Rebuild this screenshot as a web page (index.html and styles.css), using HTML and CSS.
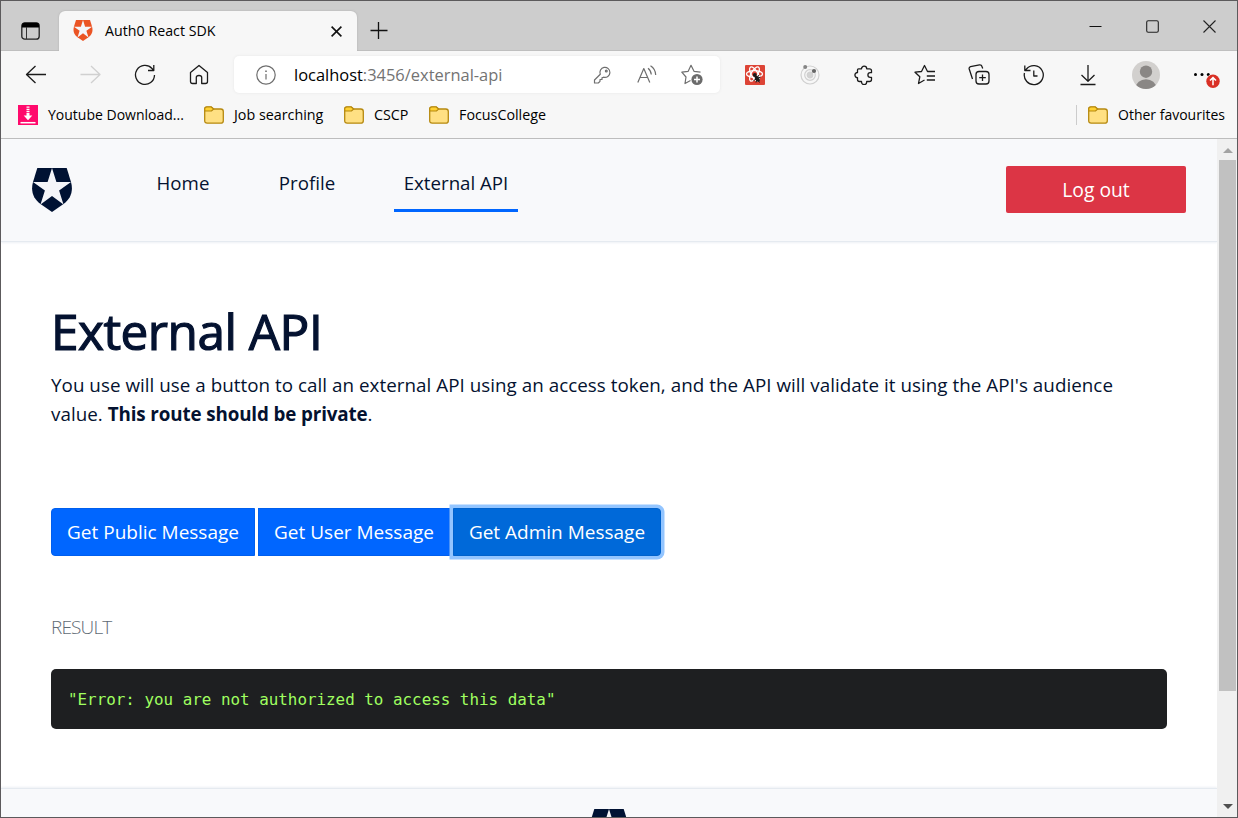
FILE: index.html
```html
<!DOCTYPE html>
<html lang="en">
<head>
<meta charset="utf-8">
<title>Auth0 React SDK</title>
<link rel="stylesheet" href="styles.css">
</head>
<body>
<svg class="defs" width="0" height="0" aria-hidden="true">
  <symbol id="shield" viewBox="0 0 40 44">
    <path fill="currentColor" d="M5.3 0H34.7L39 14C41.6 23 38.5 31 31.500 36L20 44L8.500 36C1.500 31 -1.600 23 1 14Z"/>
    <path class="shield-star" d="M20 0L24.400 14H39L27.100 22.500L31.500 36.500L20 28L8.500 36.500L12.900 22.500L1 14H15.600Z"/>
  </symbol>
  <symbol id="folder" viewBox="0 0 20 18">
    <path d="M.7 3.200Q.7 1 2.900 1H7.200L9.700 3H16.800Q19.300 3 19.300 5.500V14.700Q19.300 17.200 16.800 17.200H3.200Q.7 17.200.7 14.700Z" fill="#ffe083" stroke="#b68910" stroke-width="1.300"/>
    <path d="M.7 3.200Q.7 1 2.900 1H7.200L9.700 3 7.500 5H.9Z" fill="#ffd132" stroke="#b68910" stroke-width="1.200"/>
  </symbol>
</svg>
<div class="window">
  <header class="tabstrip">
    <svg class="tab-actions" width="19" height="18" viewBox="0 0 19 18"><rect x=".8" y=".8" width="17.400" height="16.400" rx="3" fill="none" stroke="#222" stroke-width="1.300"/><path d="M1 5.500V3Q1 .8 3.500.8H15.500Q18 .8 18 3V5.500Z" fill="#000"/><path d="M5.500 5V17" stroke="#333"/></svg>
    <div class="tab">
      <svg class="favicon" width="20" height="21"><use href="#shield"/></svg>
      <span class="tab-title">Auth0 React SDK</span>
      <svg width="11" height="11" viewBox="0 0 11 11" stroke="#111" stroke-width="1.600"><path d="M.6.6 10.400 10.400M10.400.6.6 10.400"/></svg>
    </div>
    <svg class="new-tab" width="18" height="18" viewBox="0 0 18 18" stroke="#111" stroke-width="1.300"><path d="M.5 8.500H17.500M8.500 0V17"/></svg>
    <div class="win-controls">
      <svg width="13" height="13" viewBox="0 0 13 13" stroke="#111"><path d="M.5 6.500H12.500"/></svg>
      <svg width="13" height="13" viewBox="0 0 13 13" fill="none" stroke="#222" stroke-width="1.100"><rect x=".7" y=".7" width="11.600" height="11.600" rx="1.500"/></svg>
      <svg width="13" height="13" viewBox="0 0 13 13" stroke="#222" stroke-width="1.100"><path d="M.5.5 12.500 12.500M12.500.5.5 12.500"/></svg>
    </div>
  </header>

  <div class="toolbar">
    <span class="cell"><svg class="ic" width="22" height="22" viewBox="0 0 22 22"><path d="M21 10.500H1.500M10.500 2 1.500 10.500 10.500 19"/></svg></span>
    <span class="cell off"><svg class="ic" width="22" height="22" viewBox="0 0 22 22"><path d="M1.500 10.500H21M12 2 21 10.500 12 19"/></svg></span>
    <span class="cell"><svg class="ic" width="22" height="22" viewBox="0 0 22 22"><path d="M20.500 11A9.500 9.500 0 1 1 18 4.500L19.800 6.500M19.800 1V6.500H14"/></svg></span>
    <span class="cell"><svg class="ic" width="20" height="22" viewBox="0 0 20 22"><path d="M1.500 8.500 10 1.500 18.500 8.500V17.500Q18.500 19.500 16.500 19.500H12.700V13.500Q12.700 11.500 10 11.500T7.300 13.500V19.500H3.500Q1.500 19.500 1.500 17.500Z"/></svg></span>
    <div class="address">
      <svg class="ic gray" width="20" height="20" viewBox="0 0 20 20"><circle cx="10" cy="10" r="9.200"/><path d="M10 9V14.500"/><path d="M10 5.500V7" stroke-width="1.600"/></svg>
      <span class="url">localhost<span class="path">:3456/external-api</span></span>
      <svg class="ic gray" width="18" height="18" viewBox="0 0 18 18"><path d="M7.300 8.300A5 5 0 1 1 10.600 11.200L9 11.800V13.500H7V15.300L5.300 17H1.500V14Z"/><circle cx="13.300" cy="5" r=".9"/></svg>
      <svg class="ic gray read" width="20" height="20" viewBox="0 0 20 20"><path d="M.8 17.500 6.800 3.500 12.800 17.500M3 12.500H10.700M11 3.200Q14 5.500 14.300 9.500M13.500.8Q18.500 4 18.700 10"/></svg>
      <svg class="ic gray" width="22" height="22" viewBox="0 0 22 22"><path d="M9.500 16.500 4 19.500 5 13 .8 8.200 7.200 7.300 10 1.300 13 7.300 19.500 8.200"/><circle cx="16" cy="15.500" r="5.600" fill="#6b6b6b" stroke="none"/><path d="M13 15.500H19M16 12.500V18.500" stroke="#fff" stroke-width="1.500"/></svg>
    </div>
    <span class="cell first"><svg width="20" height="20" viewBox="0 0 20 20"><rect width="20" height="20" rx="1" fill="#dd4436"/><g fill="none" stroke="#fff" stroke-width="1.300"><ellipse cx="9.500" cy="9" rx="8" ry="3.300"/><ellipse cx="9.500" cy="9" rx="8" ry="3.300" transform="rotate(60 9.500 9)"/><ellipse cx="9.500" cy="9" rx="8" ry="3.300" transform="rotate(120 9.500 9)"/></g><g fill="#1a1a1a"><circle cx="9.800" cy="10" r="1.900"/><ellipse cx="12.300" cy="13.800" rx="2" ry="3.300" transform="rotate(-35 12.300 13.800)"/></g><path d="M8.500 15.500 15.500 12M11 17.500 13.500 10M14.500 17.500 10.500 12" stroke="#1a1a1a" stroke-width="1"/></svg></span>
    <span class="cell"><svg width="20" height="20" viewBox="0 0 20 20" fill="none" stroke="#d0d0d0" stroke-width="1.200"><circle cx="10" cy="10" r="9"/><circle cx="10" cy="10" r="5.300"/><circle cx="10" cy="10" r="2.800" fill="#d2d2d2"/><g stroke="none"><circle cx="5.200" cy="2" r="2" fill="#858585"/><circle cx="14" cy="6" r="2.100" fill="#666"/></g></svg></span>
    <span class="cell"><svg class="ic" width="20" height="20" viewBox="0 0 20 20"><path d="M4.500 3.800H7.500A2.600 2.600 0 0 1 12.700 3.800H15.500Q17.500 3.800 17.500 5.800V7.700H16.200A2.300 2.300 0 0 0 16.200 12.300H17.500V14.500Q17.500 16.500 15.500 16.500H12.700V17A2.600 2.600 0 0 1 7.500 17V16.500H5.500Q3.500 16.500 3.500 14.500V12.700A2.600 2.600 0 0 1 3.500 7.500V5Q3.500 3.800 4.500 3.800Z"/></svg></span>
    <span class="divider"></span>
    <span class="cell second"><svg class="ic" width="22" height="22" viewBox="0 0 22 22"><path d="M10.500 16 4.500 19.500 5.800 12.800 1 8.200 7.500 7.500 10.500 1.500 13.500 7.500H21M12.800 12H21M12.800 16H21"/></svg></span>
    <span class="cell"><svg class="ic" width="22" height="22" viewBox="0 0 22 22"><rect x="8" y="7.500" width="13" height="12.500" rx="3"/><path d="M14.500 10.500V17M11.200 13.700H17.800M4.500 15 1.200 5Q.8 3.200 2.500 2.600L11.500.8Q13.500.6 14 2.500L14.700 4.500"/></svg></span>
    <span class="cell"><svg class="ic" width="22" height="22" viewBox="0 0 22 22"><path d="M1.500 9A9.500 9.500 0 1 0 3.500 5L1.800 6.500M1.800 1.500V6.500H7.500M10.800 6.500V12H14.500"/></svg></span>
    <span class="cell"><svg class="ic" width="18" height="22" viewBox="0 0 18 22"><path d="M9 1V17M2.500 11 9 17.300 15.500 11M1.500 20.500H16.500"/></svg></span>
    <span class="cell wide"><svg width="28" height="28" viewBox="0 0 28 28"><defs><clipPath id="face"><circle cx="14" cy="14" r="14"/></clipPath></defs><circle cx="14" cy="14" r="14" fill="#d2d0ce"/><g clip-path="url(#face)" fill="#8a8785"><circle cx="14" cy="10.700" r="6.200"/><ellipse cx="14" cy="27" rx="10.300" ry="8.800"/></g></svg></span>
    <span class="cell menu"><svg width="32" height="28" viewBox="0 0 32 28"><circle cx="3.500" cy="13.500" r="1.500"/><circle cx="10" cy="13.500" r="1.500"/><circle cx="16.300" cy="13.500" r="1.500"/><circle cx="21" cy="20.300" r="7.300" fill="#f7f7f7"/><circle cx="21" cy="20.300" r="6.700" fill="#d93025"/><path d="M21 24.300V16.800M18 19.500 21 16.600 24 19.500" fill="none" stroke="#fff" stroke-width="1.500"/></svg></span>
  </div>

  <nav class="bookmarks">
    <span class="mark b1"><svg width="20" height="20" viewBox="0 0 20 20"><rect width="20" height="20" fill="#ff0a6c"/><path d="M8.500 2.200H11.500M8.500 4.500H11.500M8.500 6.700H11.500" stroke="#fff" stroke-width="1.300"/><path d="M8.500 8H11.500V10.500H14.300L10 15.300 5.700 10.500H8.500Z" fill="#fff"/><path d="M2.500 17.700H17.500" stroke="#fff" stroke-width="1.500"/></svg><span>Youtube Download...</span></span>
    <span class="mark b2"><svg width="20" height="18"><use href="#folder"/></svg><span>Job searching</span></span>
    <span class="mark b3"><svg width="20" height="18"><use href="#folder"/></svg><span>CSCP</span></span>
    <span class="mark b4"><svg width="20" height="18"><use href="#folder"/></svg><span>FocusCollege</span></span>
    <span class="mark other"><svg width="20" height="18"><use href="#folder"/></svg><span>Other favourites</span></span>
  </nav>

  <div class="viewport">
    <div class="page">
      <div class="navbar">
        <svg class="logo" width="40" height="44"><use href="#shield"/></svg>
        <a class="link home">Home</a>
        <a class="link profile">Profile</a>
        <a class="link active">External API</a>
        <button class="logout">Log out</button>
      </div>
      <main>
        <h1>External API</h1>
        <p class="lead">You use will use a button to call an external API using an access token, and the API will validate it using the API's audience<br>value. <strong>This route should be private</strong>.</p>
        <div class="buttons">
          <button class="btn start">Get Public Message</button>
          <button class="btn mid">Get User Message</button>
          <button class="btn end">Get Admin Message</button>
        </div>
        <h6>RESULT</h6>
        <pre>"Error: you are not authorized to access this data"</pre>
      </main>
      <footer><svg class="logo" width="40" height="44"><use href="#shield"/></svg></footer>
    </div>
    <div class="scrollbar">
      <svg width="10" height="5" viewBox="0 0 10 5"><path d="M0 5 5 0 10 5Z" fill="#a3a3a3"/></svg>
      <div class="thumb"></div>
      <svg class="down" width="10" height="5" viewBox="0 0 10 5"><path d="M0 0H10L5 5Z" fill="#505050"/></svg>
    </div>
  </div>
</div>
</body>
</html>
```
FILE: styles.css
```css
* { box-sizing: border-box; }
body { margin: 0; font-family: "Open Sans", "Noto Sans", sans-serif; color: #000; }
svg { display: block; flex: none; }
.defs { position: absolute; }
button { font: inherit; border: 0; padding: 0; white-space: nowrap; }
.window { width: 1238px; height: 818px; border: 1px solid #5c5a5c; display: flex; flex-direction: column; overflow: hidden; background: #f7f7f7; }

.tabstrip { height: 50px; flex: none; background: #cdcdcd; display: flex; align-items: flex-end; box-shadow: inset 0 -1px #bfbfbf; }
.tab-actions { margin: 0 0 11px 20px; }
.tab { width: 298px; height: 40px; margin-left: 19px; padding: 0 15px 0 14px; background: #f7f7f7; border-radius: 6px 6px 0 0; display: flex; align-items: center; box-shadow: 0 0 2px #aaa; clip-path: inset(-3px -3px 0 -3px); }
.favicon { color: #eb5424; margin-bottom: 1px; }
.shield-star { fill: #f4f5f9; }
.tab-title { font-size: 14.200px; letter-spacing: .03px; margin: 0 0 2px 12px; flex: 1; white-space: nowrap; }
.new-tab { margin: 0 0 11px 13px; }
.win-controls { margin: 0 21px 18px auto; display: flex; gap: 44px; }

.toolbar { height: 48px; flex: none; display: flex; align-items: center; padding-left: 7.500px; }
.cell { width: 54.500px; display: flex; justify-content: center; flex: none; }
.ic { fill: none; stroke: #1b1b1b; stroke-width: 1.300; stroke-linejoin: round; }
.off .ic { stroke: #d0d0d0; }
.ic.gray { stroke: #6e6e6e; stroke-width: 1.200; }
.address { width: 486px; height: 37px; margin: 0 0 1px 7.500px; padding: 0 17px 0 22px; background: #fff; border-radius: 5px; box-shadow: 0 0 3px #e6e6e6; display: flex; align-items: center; gap: 26px; flex: none; }
.read { margin-right: -2px; }
.url { flex: 1; margin: 0 0 1px -8px; font-size: 16.450px; white-space: nowrap; }
.path { color: #737373; }
.first { margin-left: 8px; }
.divider { width: 1px; height: 20px; background: #ccc; margin-left: 3px; }
.second { margin-left: 3px; }
.wide { width: 60px; }
.menu { width: 64px; }

.bookmarks { height: 40px; flex: none; border-bottom: 1px solid #bdbdbd; display: flex; padding: 0 12px 8px 17px; align-items: center; font-size: 14px; white-space: nowrap; }
.mark { display: flex; align-items: center; gap: 10px; flex: none; }
.b1 { width: 186px; }
.b2 { width: 140px; font-size: 14.300px; }
.b3 { width: 85px; font-size: 14.300px; }
.b4 { font-size: 14.300px; }
.other { margin-left: auto; height: 20px; border-left: 1px solid #ccc; padding-left: 11px; }

.viewport { flex: 1; display: flex; min-height: 0; }
.page { width: 1216px; flex: none; background: #fff; color: #041230; overflow: hidden; display: flex; flex-direction: column; font-size: 18.700px; }
.navbar { height: 103px; flex: none; background: #f8f9fb; border-bottom: 1px solid #e5eaf0; box-shadow: 0 1px 2px #edf0f5; display: flex; align-items: flex-start; padding: 28px 31px 0; }
.logo { color: #001233; }
.navbar .logo { margin-top: .500px; }
.link { height: 45px; line-height: 32px; text-align: center; white-space: nowrap; }
.home { margin-left: 74px; width: 74px; }
.profile { margin-left: 47px; width: 80px; }
.active { margin-left: 47px; width: 124px; border-bottom: 3px solid #0066ff; }
.logout { margin: -1px 0 0 auto; width: 180px; height: 47px; border-radius: 2px; background: #dc3545; color: #fff; font-size: 19.300px; }
main { padding: 55px 50px 0; flex: none; height: 546px; }
h1 { font-size: 49.500px; font-weight: 400; -webkit-text-stroke: 1.200px #041230; letter-spacing: -.5px; line-height: 68px; margin: 0 0 6px; white-space: nowrap; }
.lead { margin: 0; font-size: 18.800px; letter-spacing: .04px; line-height: 29px; white-space: nowrap; }
.lead strong { letter-spacing: -.12px; }
.buttons { display: flex; gap: 3px; margin-top: 79px; }
.btn { height: 48px; background: #0066ff; color: #fff; border: 1px solid #005fee; font-size: 19px; }
.start { width: 204px; border-radius: 4px 0 0 4px; }
.mid { width: 192px; }
.end { width: 208px; background: #0069d9; border-color: #0062cc; border-radius: 0 4px 4px 0; box-shadow: 0 0 0 3.500px #93c5ff; }
h6 { margin: 56px 0 0; font-size: 19px; letter-spacing: -.85px; font-weight: 300; line-height: 30px; color: #5f6b75; }
pre { margin: 27px 0 0; width: 1116px; height: 60px; padding: 0 17px; border-radius: 5px; background: #1e1f21; color: #a0ff60; font: 15.880px/61px "DejaVu Sans Mono", monospace; }
footer { flex: 1; background: #f8f9fb; border-top: 1px solid #e5eaf0; box-shadow: 0 -1px 2px #edf0f5; display: flex; justify-content: center; padding-top: 20px; }
.scrollbar { width: 20px; background: #f0f0f0; padding: 9px 1px 8px 2px; display: flex; flex-direction: column; align-items: center; }
.thumb { width: 17px; height: 531px; margin-top: 7px; background: #c1c1c1; }
.down { margin-top: auto; }
```
